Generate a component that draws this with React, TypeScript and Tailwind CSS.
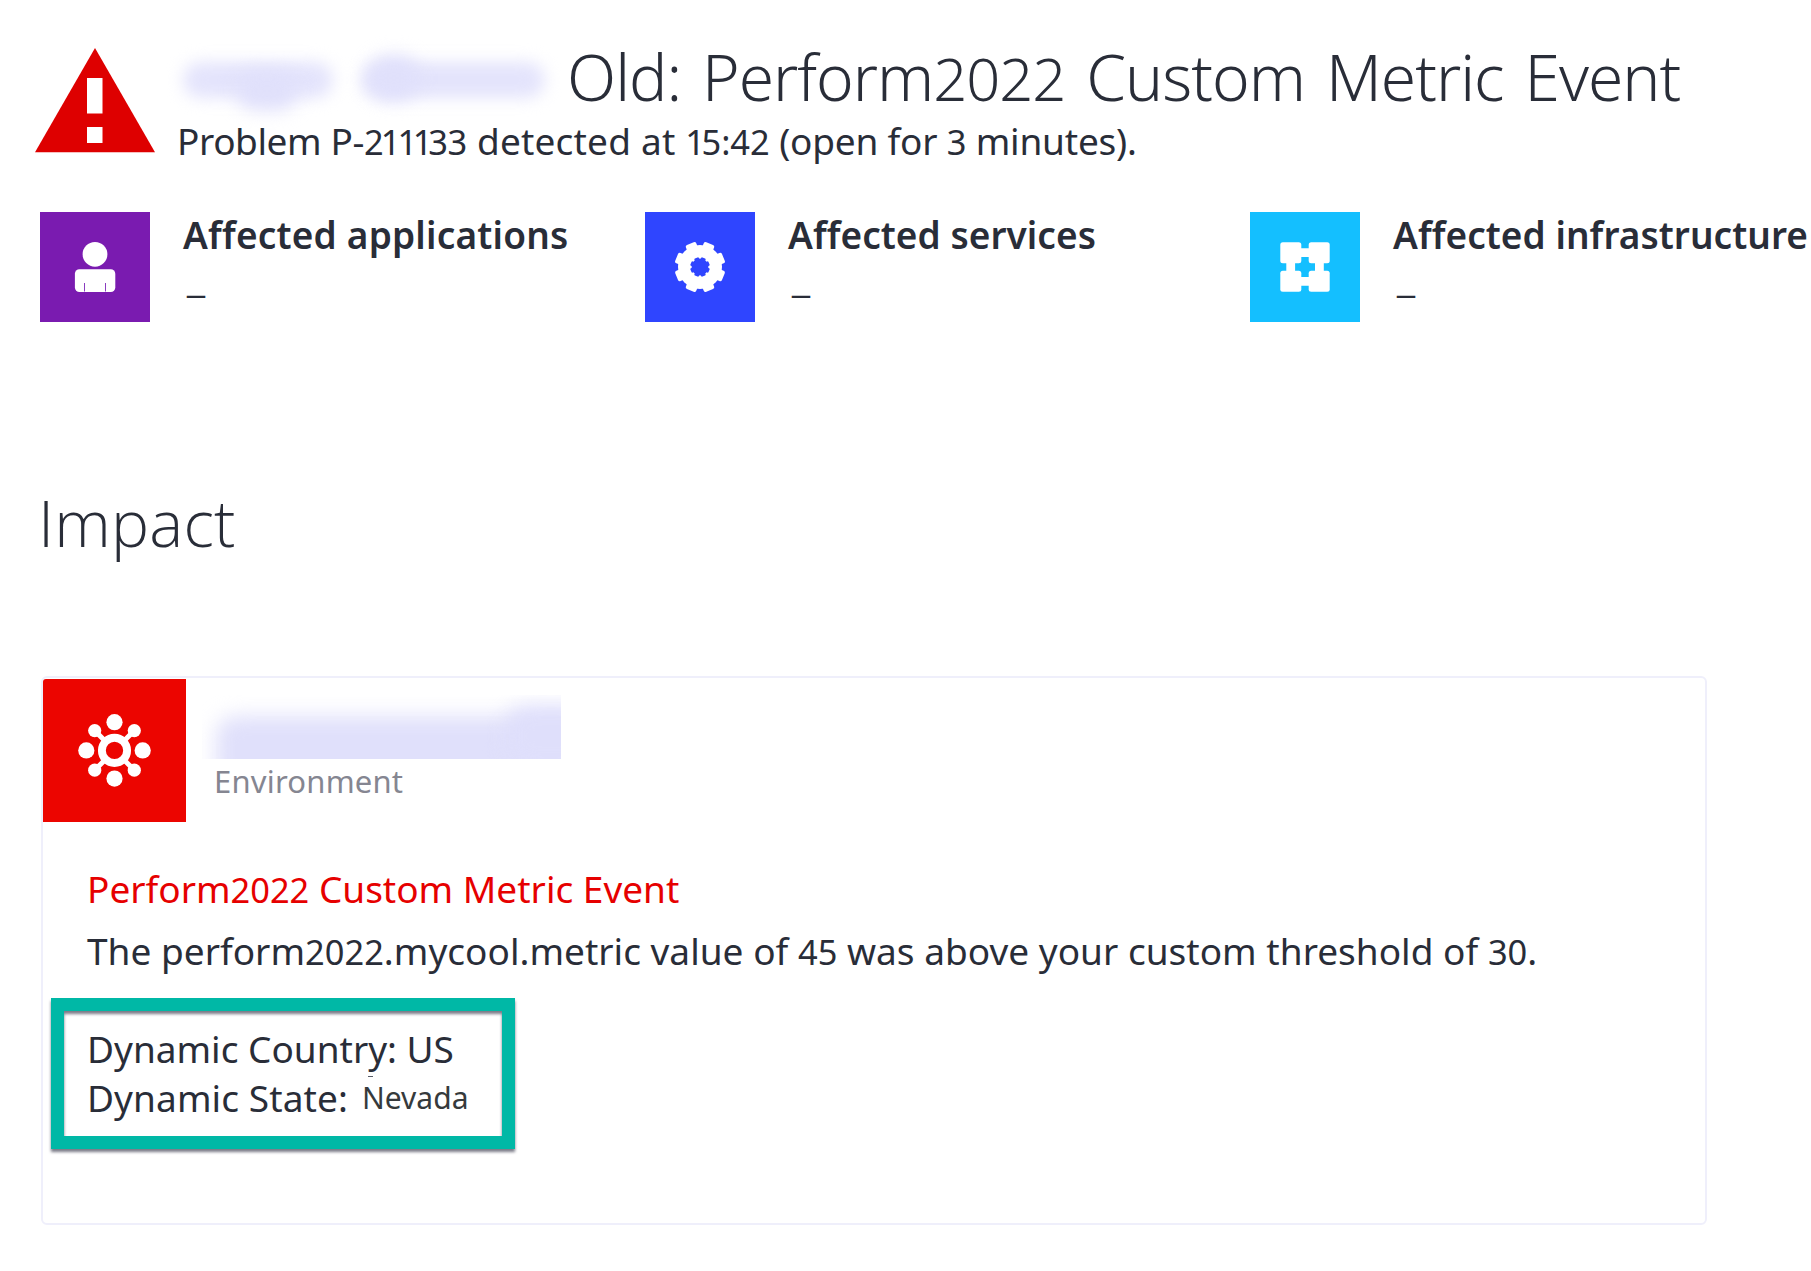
import type { ReactNode } from 'react';

function WarningIcon() {
  return (
    <svg className="mt-[9px] h-[105px] w-[120px] shrink-0" viewBox="0 0 120 105">
      <path d="M60 0 120 104.3H0Z" fill="#de0000" />
      <path d="M52 30h15.5v35.5H52ZM52 79h15.5v16H52Z" fill="#fff" />
    </svg>
  );
}

function PersonIcon() {
  return (
    <svg className="size-[110px]" viewBox="0 0 110 110">
      <circle cx="55" cy="42.3" r="12.4" fill="#fff" />
      <rect x="34.9" y="57.3" width="40.4" height="22.7" rx="4.5" fill="#fff" />
      <path d="M44.5 71v8.5M65.5 71v8.5" stroke="#8a3cc0" strokeWidth="1" />
    </svg>
  );
}

const TEETH = [22.5, 67.5, 112.5, 157.5, 202.5, 247.5, 292.5, 337.5];

function GearIcon() {
  return (
    <svg className="size-[110px]" viewBox="0 0 110 110">
      <g transform="translate(55 55)">
        <circle r="22" fill="#fff" />
        {TEETH.map((a) => (
          <rect key={a} x="-5.6" y="-25.3" width="11.2" height="10" rx="2" fill="#fff" transform={`rotate(${a})`} />
        ))}
        <circle r="8.4" fill="#2f45ff" />
        {TEETH.map((a) => (
          <rect key={a} x="-2.4" y="-9.8" width="4.8" height="5" rx="1" fill="#2f45ff" transform={`rotate(${a})`} />
        ))}
      </g>
    </svg>
  );
}

function InfrastructureIcon() {
  return (
    <svg className="size-[110px]" viewBox="0 0 110 110" fill="#fff">
      <rect x="30.3" y="30.3" width="21" height="21" rx="2.5" />
      <rect x="58.7" y="30.3" width="21" height="21" rx="2.5" />
      <rect x="30.3" y="58.7" width="21" height="21" rx="2.5" />
      <rect x="58.7" y="58.7" width="21" height="21" rx="2.5" />
      <path d="M36.3 48h8.8v14h-8.8ZM65 48h8.8v14H65ZM48 36.3h14v8.8H48ZM48 65h14v8.8H48Z" />
    </svg>
  );
}

function EnvironmentIcon() {
  return (
    <svg className="size-[143px]" viewBox="0 0 143 143">
      <g transform="translate(71.5 71.4)" fill="#fff">
        <circle r="12.6" fill="none" stroke="#fff" strokeWidth="7.9" />
        {[0, 90, 180, 270].map((a) => (
          <circle key={a} cy="-28.2" r="8.1" transform={`rotate(${a})`} />
        ))}
        {[45, 135, 225, 315].map((a) => (
          <g key={a} transform={`rotate(${a})`}>
            <circle cy="-28" r="6.6" />
            <rect x="-2.5" y="-25" width="5" height="11" />
          </g>
        ))}
      </g>
    </svg>
  );
}

/* Figures are set a little smaller than the capitals beside them. */
function Num({ children, className = '' }: { children: ReactNode; className?: string }) {
  return <span className={`text-[0.93em] leading-none ${className}`}>{children}</span>;
}

function Affected({ color, icon, label, spacing }: { color: string; icon: ReactNode; label: string; spacing: string }) {
  return (
    <div className="flex w-[605px] shrink-0">
      <div className={`size-[110px] shrink-0 ${color}`}>{icon}</div>
      <div className="-mt-px ml-[33px] text-[37px] leading-[48px]">
        <div className={`font-semibold whitespace-nowrap ${spacing}`}>{label}</div>
        <div className="mt-[9px] pl-[2px] text-[44px] font-light">–</div>
      </div>
    </div>
  );
}

export default function App() {
  return (
    <div className="h-[1271px] w-[1811px] overflow-hidden bg-white font-['Noto_Sans',sans-serif] text-[#292d38]">
      <header className="flex h-[212px] pt-[39px] pl-[35px]">
        <WarningIcon />
        <div className="ml-[19px]">
          <div className="flex h-[72px]">
            <div className="flex w-[393px] shrink-0 gap-[28px] pt-[23px] pl-[9px]">
              <div className="h-[36px] w-[150px]">
                <div className="h-[36px] rounded-[18px] bg-[#e4e4fc] blur-[8px]" />
                <div className="mt-[-26px] ml-[54px] h-[38px] w-[60px] rounded-full bg-[#e0e0fb] blur-[9px]" />
              </div>
              <div className="h-[36px] w-[184px]">
                <div className="h-[36px] rounded-[18px] bg-[#e4e4fc] blur-[8px]" />
                <div className="mt-[-42px] ml-[8px] h-[44px] w-[50px] rounded-full bg-[#e0e0fb] blur-[9px]" />
              </div>
            </div>
            <h1 className="pt-[2px] text-[64px] leading-[72px] font-light tracking-[-1px] whitespace-nowrap [word-spacing:5.4px]">
              Old: Perform<Num>2022</Num> Custom Metric Event
            </h1>
          </div>
          <p className="mt-[6px] pl-[3px] text-[37px] leading-[48px] whitespace-nowrap">
            <span className="tracking-[-0.4px]">Problem P-</span>
            <Num className="tracking-[-3px]">21</Num>
            <Num className="tracking-[-4.3px]">11</Num>
            <Num className="tracking-[-0.2px]">33</Num>
            <span className="tracking-[0.2px]"> detected at </span>
            <Num className="tracking-[-3.5px]">1</Num>
            <Num>5:42</Num>
            <span className="tracking-[-0.2px]">
              {' '}
              (open for <Num>3</Num> minutes).
            </span>
          </p>
        </div>
      </header>

      <section className="flex h-[270px] pl-[40px]">
        <Affected color="bg-[#7a1bb0]" icon={<PersonIcon />} label="Affected applications" spacing="tracking-[0.2px]" />
        <Affected color="bg-[#2f45ff]" icon={<GearIcon />} label="Affected services" spacing="tracking-[0.05px]" />
        <Affected color="bg-[#14bfff]" icon={<InfrastructureIcon />} label="Affected infrastructure" spacing="tracking-[0.05px]" />
      </section>

      <h2 className="ml-[38px] h-[194px] font-['Open_Sans',sans-serif] text-[64px] leading-[81px] font-light tracking-[0.2px]">
        Impact
      </h2>

      <section className="ml-[41px] h-[549px] w-[1666px] rounded-[6px] border-2 border-[#efeffb]">
        <div className="flex h-[144px] pt-px">
          <div className="size-[143px] shrink-0 rounded-tl-[3px] bg-[#ec0500]">
            <EnvironmentIcon />
          </div>
          <div className="ml-[16px] pt-[16px]">
            <div className="h-[64px] w-[359px] overflow-hidden pt-[21px] pl-[14px]">
              <div className="h-[70px] w-[380px] rounded-[20px] bg-[#e0e0fb] blur-[10px]" />
              <div className="mt-[-80px] ml-[290px] h-[60px] w-[90px] rounded-[20px] bg-[#dfdffb] blur-[10px]" />
            </div>
            <div className="pl-[12px] text-[31px] leading-[44px] tracking-[0.2px] text-[#858691]">Environment</div>
          </div>
        </div>

        <div className="pl-[44px] text-[37px] leading-[48px] whitespace-nowrap">
          <div className="mt-[43px] text-[#e60000]">
            Perform<Num>2022</Num> Custom Metric Event
          </div>
          <p className="mt-[14px] tracking-[0.02px]">
            The perform<Num>2022</Num>.mycool.metric value of <Num>45</Num> was above your custom threshold of{' '}
            <Num>30</Num>.
          </p>
        </div>

        <div className="relative mt-[23px] ml-[8px] h-[151px] w-[464px] pt-[26px] pl-[36px] text-[37px] leading-[49px] whitespace-nowrap">
          <div className="absolute inset-0 border-13 border-[#00b8a6] drop-shadow-[0_3px_1.5px_rgba(50,50,70,0.65)]" />
          <div>Dynamic Country: US</div>
          <div className="flex items-baseline">
            <span className="tracking-[0.1px]">Dynamic State:</span>
            <span className="relative top-[-3px] ml-[14px] text-[30px] leading-none text-[#363a3c]">Nevada</span>
          </div>
          <span className="absolute top-[78px] left-[317px] h-px w-[5px] bg-[#555a66]" />
        </div>
      </section>
    </div>
  );
}
